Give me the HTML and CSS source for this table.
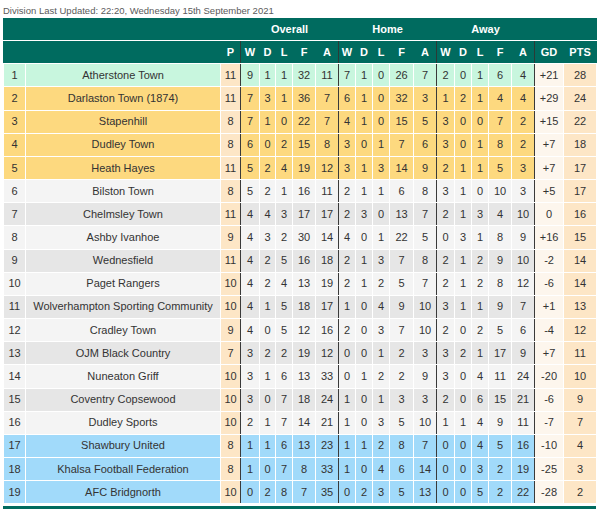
FILE: index.html
```html
<!DOCTYPE html>
<html>
<head>
<meta charset="utf-8">
<link rel="stylesheet" href="styles.css">
</head>
<body>
<div class="updated">Division Last Updated: 22:20, Wednesday 15th September 2021</div>
<table class="league">
<colgroup>
<col class="c-pos"><col class="c-team"><col class="c-p">
<col class="c-w"><col class="c-d"><col class="c-l"><col class="c-f"><col class="c-a">
<col class="c-hw"><col class="c-hd"><col class="c-hl"><col class="c-hf"><col class="c-ha">
<col class="c-aw"><col class="c-ad"><col class="c-al"><col class="c-af"><col class="c-aa">
<col class="c-gd"><col class="c-pts">
</colgroup>
<thead>
<tr class="h1"><th colspan="3"></th><th colspan="5">Overall</th><th colspan="5">Home</th><th colspan="5">Away</th><th colspan="2"></th></tr>
<tr class="h2"><th></th><th></th><th class="ge">P</th><th>W</th><th>D</th><th>L</th><th>F</th><th class="ge">A</th><th>W</th><th>D</th><th>L</th><th>F</th><th class="ge">A</th><th>W</th><th>D</th><th>L</th><th>F</th><th class="ge">A</th><th>GD</th><th>PTS</th></tr>
</thead>
<tbody>
<tr class="r-promo"><td>1</td><td>Atherstone Town</td><td class="p ge">11</td><td>9</td><td>1</td><td>1</td><td>32</td><td class="ge">11</td><td>7</td><td>1</td><td>0</td><td>26</td><td class="ge">7</td><td>2</td><td>0</td><td>1</td><td>6</td><td class="ge">4</td><td class="gd">+21</td><td class="pts">28</td></tr>
<tr class="r-play"><td>2</td><td>Darlaston Town (1874)</td><td class="p ge">11</td><td>7</td><td>3</td><td>1</td><td>36</td><td class="ge">7</td><td>6</td><td>1</td><td>0</td><td>32</td><td class="ge">3</td><td>1</td><td>2</td><td>1</td><td>4</td><td class="ge">4</td><td class="gd">+29</td><td class="pts">24</td></tr>
<tr class="r-play"><td>3</td><td>Stapenhill</td><td class="p ge">8</td><td>7</td><td>1</td><td>0</td><td>22</td><td class="ge">7</td><td>4</td><td>1</td><td>0</td><td>15</td><td class="ge">5</td><td>3</td><td>0</td><td>0</td><td>7</td><td class="ge">2</td><td class="gd">+15</td><td class="pts">22</td></tr>
<tr class="r-play"><td>4</td><td>Dudley Town</td><td class="p ge">8</td><td>6</td><td>0</td><td>2</td><td>15</td><td class="ge">8</td><td>3</td><td>0</td><td>1</td><td>7</td><td class="ge">6</td><td>3</td><td>0</td><td>1</td><td>8</td><td class="ge">2</td><td class="gd">+7</td><td class="pts">18</td></tr>
<tr class="r-play"><td>5</td><td>Heath Hayes</td><td class="p ge">11</td><td>5</td><td>2</td><td>4</td><td>19</td><td class="ge">12</td><td>3</td><td>1</td><td>3</td><td>14</td><td class="ge">9</td><td>2</td><td>1</td><td>1</td><td>5</td><td class="ge">3</td><td class="gd">+7</td><td class="pts">17</td></tr>
<tr class="r-light"><td>6</td><td>Bilston Town</td><td class="p ge">8</td><td>5</td><td>2</td><td>1</td><td>16</td><td class="ge">11</td><td>2</td><td>1</td><td>1</td><td>6</td><td class="ge">8</td><td>3</td><td>1</td><td>0</td><td>10</td><td class="ge">3</td><td class="gd">+5</td><td class="pts">17</td></tr>
<tr class="r-dark"><td>7</td><td>Chelmsley Town</td><td class="p ge">11</td><td>4</td><td>4</td><td>3</td><td>17</td><td class="ge">17</td><td>2</td><td>3</td><td>0</td><td>13</td><td class="ge">7</td><td>2</td><td>1</td><td>3</td><td>4</td><td class="ge">10</td><td class="gd">0</td><td class="pts">16</td></tr>
<tr class="r-light"><td>8</td><td>Ashby Ivanhoe</td><td class="p ge">9</td><td>4</td><td>3</td><td>2</td><td>30</td><td class="ge">14</td><td>4</td><td>0</td><td>1</td><td>22</td><td class="ge">5</td><td>0</td><td>3</td><td>1</td><td>8</td><td class="ge">9</td><td class="gd">+16</td><td class="pts">15</td></tr>
<tr class="r-dark"><td>9</td><td>Wednesfield</td><td class="p ge">11</td><td>4</td><td>2</td><td>5</td><td>16</td><td class="ge">18</td><td>2</td><td>1</td><td>3</td><td>7</td><td class="ge">8</td><td>2</td><td>1</td><td>2</td><td>9</td><td class="ge">10</td><td class="gd">-2</td><td class="pts">14</td></tr>
<tr class="r-light"><td>10</td><td>Paget Rangers</td><td class="p ge">10</td><td>4</td><td>2</td><td>4</td><td>13</td><td class="ge">19</td><td>2</td><td>1</td><td>2</td><td>5</td><td class="ge">7</td><td>2</td><td>1</td><td>2</td><td>8</td><td class="ge">12</td><td class="gd">-6</td><td class="pts">14</td></tr>
<tr class="r-dark"><td>11</td><td>Wolverhampton Sporting Community</td><td class="p ge">10</td><td>4</td><td>1</td><td>5</td><td>18</td><td class="ge">17</td><td>1</td><td>0</td><td>4</td><td>9</td><td class="ge">10</td><td>3</td><td>1</td><td>1</td><td>9</td><td class="ge">7</td><td class="gd">+1</td><td class="pts">13</td></tr>
<tr class="r-light"><td>12</td><td>Cradley Town</td><td class="p ge">9</td><td>4</td><td>0</td><td>5</td><td>12</td><td class="ge">16</td><td>2</td><td>0</td><td>3</td><td>7</td><td class="ge">10</td><td>2</td><td>0</td><td>2</td><td>5</td><td class="ge">6</td><td class="gd">-4</td><td class="pts">12</td></tr>
<tr class="r-dark"><td>13</td><td>OJM Black Country</td><td class="p ge">7</td><td>3</td><td>2</td><td>2</td><td>19</td><td class="ge">12</td><td>0</td><td>0</td><td>1</td><td>2</td><td class="ge">3</td><td>3</td><td>2</td><td>1</td><td>17</td><td class="ge">9</td><td class="gd">+7</td><td class="pts">11</td></tr>
<tr class="r-light"><td>14</td><td>Nuneaton Griff</td><td class="p ge">10</td><td>3</td><td>1</td><td>6</td><td>13</td><td class="ge">33</td><td>0</td><td>1</td><td>2</td><td>2</td><td class="ge">9</td><td>3</td><td>0</td><td>4</td><td>11</td><td class="ge">24</td><td class="gd">-20</td><td class="pts">10</td></tr>
<tr class="r-dark"><td>15</td><td>Coventry Copsewood</td><td class="p ge">10</td><td>3</td><td>0</td><td>7</td><td>18</td><td class="ge">24</td><td>1</td><td>0</td><td>1</td><td>3</td><td class="ge">3</td><td>2</td><td>0</td><td>6</td><td>15</td><td class="ge">21</td><td class="gd">-6</td><td class="pts">9</td></tr>
<tr class="r-light"><td>16</td><td>Dudley Sports</td><td class="p ge">10</td><td>2</td><td>1</td><td>7</td><td>14</td><td class="ge">21</td><td>1</td><td>0</td><td>3</td><td>5</td><td class="ge">10</td><td>1</td><td>1</td><td>4</td><td>9</td><td class="ge">11</td><td class="gd">-7</td><td class="pts">7</td></tr>
<tr class="r-rel"><td>17</td><td>Shawbury United</td><td class="p ge">8</td><td>1</td><td>1</td><td>6</td><td>13</td><td class="ge">23</td><td>1</td><td>1</td><td>2</td><td>8</td><td class="ge">7</td><td>0</td><td>0</td><td>4</td><td>5</td><td class="ge">16</td><td class="gd">-10</td><td class="pts">4</td></tr>
<tr class="r-rel"><td>18</td><td>Khalsa Football Federation</td><td class="p ge">8</td><td>1</td><td>0</td><td>7</td><td>8</td><td class="ge">33</td><td>1</td><td>0</td><td>4</td><td>6</td><td class="ge">14</td><td>0</td><td>0</td><td>3</td><td>2</td><td class="ge">19</td><td class="gd">-25</td><td class="pts">3</td></tr>
<tr class="r-rel"><td>19</td><td>AFC Bridgnorth</td><td class="p ge">10</td><td>0</td><td>2</td><td>8</td><td>7</td><td class="ge">35</td><td>0</td><td>2</td><td>3</td><td>5</td><td class="ge">13</td><td>0</td><td>0</td><td>5</td><td>2</td><td class="ge">22</td><td class="gd">-28</td><td class="pts">2</td></tr>
</tbody>
</table>
<div class="foot"></div>
</body>
</html>
```
FILE: styles.css
```css
body {
  margin: 0;
  padding: 4px 4px 0 3px;
  font-family: "Liberation Sans", Arial, sans-serif;
  background: #fff;
}
.updated {
  font-size: 9.5px;
  line-height: 13px;
  color: #5a5a5a;
  height: 13px;
  margin-bottom: 1px;
}
.league {
  border-collapse: collapse;
  table-layout: fixed;
  width: 593px;
}
.league th,
.league td {
  padding: 0;
  height: 22.17px;
  text-align: center;
  font-size: 11px;
  line-height: 13px;
  white-space: nowrap;
  overflow: hidden;
}
.league td {
  border: 1px solid #fff;
  color: #333;
}
.league th {
  background: #006b5f;
  color: #fff;
  font-weight: bold;
  border-top: 1px solid #fff;
  border-bottom: 1px solid #fff;
  border-left: 1px solid #006b5f;
  border-right: 1px solid #006b5f;
}
.league .h1 th { border-top: 0; }
.league th.ge { border-right: 1px solid #2b3a36; }
.league td.ge { border-right: 1px solid #3a3a3a; }

.c-pos { width: 22px; }
.c-team { width: 195px; }
.c-p { width: 20px; }
.c-w { width: 19px; }
.c-d { width: 16px; }
.c-l { width: 17px; }
.c-f { width: 23px; }
.c-a { width: 23px; }
.c-hw { width: 17px; }
.c-hd { width: 17px; }
.c-hl { width: 17px; }
.c-hf { width: 24px; }
.c-ha { width: 23px; }
.c-aw { width: 18px; }
.c-ad { width: 17px; }
.c-al { width: 17px; }
.c-af { width: 23px; }
.c-aa { width: 23px; }
.c-gd { width: 29px; }
.c-pts { width: 33px; }

.r-promo td { background: #c8f6de; }
.r-play td { background: #fdd97f; }
.r-light td { background: #f4f4f4; }
.r-dark td { background: #e6e6e6; }
.r-rel td { background: #a1dafa; }
.league td.p { background: #fde6c6; }
.league td.gd { background: #fdf6ed; }
.league td.pts { background: #fde6c6; }

.foot {
  width: 593px;
  height: 3px;
  margin-top: 2px;
  background: #006b5f;
}
```
